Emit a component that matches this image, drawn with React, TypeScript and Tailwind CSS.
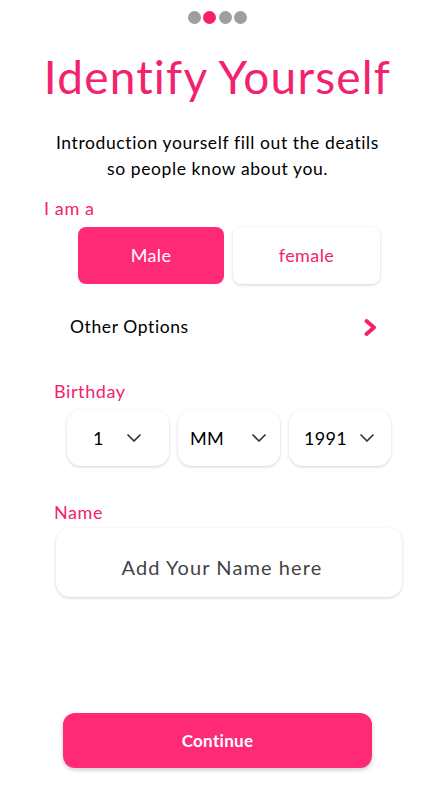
import React, { useState } from "react";
import { ChevronDown } from "lucide-react";

const font = { fontFamily: "Lato, 'Noto Sans', sans-serif" };

type DropProps = { value: string; pad: string; textW: string };

const Dropdown = ({ value, pad, textW }: DropProps) => (
  <div className={`flex h-[56px] w-[102px] items-center rounded-[14px] bg-white shadow-[0_1px_3px_rgba(0,0,0,0.18)] ${pad}`}>
    <span className={`${textW} text-[18px] tracking-[0.3px] text-black`}>{value}</span>
    <ChevronDown size={24} strokeWidth={1.7} className="text-[#333]" />
  </div>
);

const App = () => {
  const [gender, setGender] = useState("male");

  return (
    <div className="flex h-[812px] w-[435px] flex-col bg-white" style={font}>
      <div className="flex justify-center gap-[2.5px] pt-[11px]">
        <span className="h-[13px] w-[13px] rounded-full bg-[#9e9e9e]" />
        <span className="h-[13px] w-[13px] rounded-full bg-[#f2226f]" />
        <span className="h-[13px] w-[13px] rounded-full bg-[#9e9e9e]" />
        <span className="h-[13px] w-[13px] rounded-full bg-[#9e9e9e]" />
      </div>

      <h1 className="mt-[25px] text-center text-[46px] leading-[56px] tracking-[1.2px] text-[#f2226f]">
        Identify Yourself
      </h1>

      <p className="mt-[25px] text-center text-[17.5px] leading-[26px] tracking-[0.6px] text-black">
        Introduction yourself fill out the deatils
        <br />
        so people know about you.
      </p>

      <div className="mt-[15px] pl-[44px] text-[18px] leading-[22px] tracking-[0.6px] text-[#f2226f]">
        I am a
      </div>

      <div className="mt-[8px] ml-[78px] flex gap-[9px]">
        <button
          onClick={() => setGender("male")}
          className={`h-[57px] w-[146px] rounded-[8px] text-[18px] tracking-[0.4px] ${
            gender === "male"
              ? "bg-[#fe2a75] text-white"
              : "bg-white text-[#f2226f] shadow-[0_1px_3px_rgba(0,0,0,0.18)]"
          }`}
        >
          Male
        </button>
        <button
          onClick={() => setGender("female")}
          className={`h-[57px] w-[147px] rounded-[8px] text-[18px] tracking-[0.4px] ${
            gender === "female"
              ? "bg-[#fe2a75] text-white"
              : "bg-white text-[#f2226f] shadow-[0_1px_3px_rgba(0,0,0,0.18)]"
          }`}
        >
          female
        </button>
      </div>

      <div className="mt-[28px] ml-[70px] mr-[57px] flex items-center justify-between">
        <span className="text-[17.5px] leading-[30px] tracking-[0.6px] text-black">Other Options</span>
        <svg width="15" height="19" viewBox="0 0 15 19" fill="none">
          <polyline
            points="3.5,3 11,9.5 3.5,16"
            stroke="#f2226f"
            strokeWidth="4"
            strokeLinecap="round"
            strokeLinejoin="round"
          />
        </svg>
      </div>

      <div className="mt-[38px] pl-[54px] text-[18px] leading-[22px] tracking-[0.6px] text-[#f2226f]">
        Birthday
      </div>

      <div className="mt-[8px] ml-[67px] flex gap-[9px]">
        <Dropdown value="1" pad="pl-[26px]" textW="w-[29px]" />
        <Dropdown value="MM" pad="pl-[12px]" textW="w-[57px]" />
        <Dropdown value="1991" pad="pl-[15px]" textW="w-[51px]" />
      </div>

      <div className="mt-[35px] pl-[54px] text-[18px] leading-[22px] tracking-[0.6px] text-[#f2226f]">
        Name
      </div>

      <div className="mt-[5px] ml-[56px] flex h-[69px] w-[346px] items-center justify-center rounded-[14px] bg-white pt-[9px] pr-[14px] shadow-[0_1px_3px_rgba(0,0,0,0.18)]">
        <input
          placeholder="Add Your Name here"
          className="w-full bg-transparent text-center text-[20px] tracking-[1.1px] text-[#444] outline-none placeholder:text-[#444]"
        />
      </div>

      <button className="mt-auto mb-[44px] ml-[63px] h-[55px] w-[309px] rounded-[12px] bg-[#fe2a75] text-[17px] font-bold tracking-[0.3px] text-white shadow-[0_2px_4px_rgba(0,0,0,0.2)]">
        Continue
      </button>
    </div>
  );
};

export default App;
